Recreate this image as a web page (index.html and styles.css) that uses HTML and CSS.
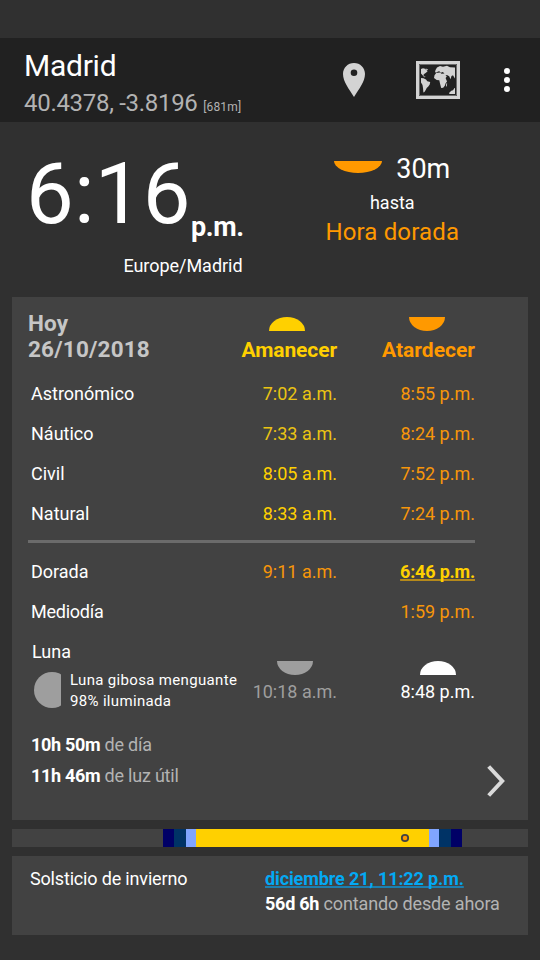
FILE: index.html
```html
<!DOCTYPE html>
<html lang="es">
<head>
<meta charset="utf-8">
<title>Madrid</title>
<link rel="stylesheet" href="styles.css">
</head>
<body>
<header class="bar">
  <div class="place">
    <div class="city">Madrid</div>
    <div class="coords"><span class="latlon">40.4378, -3.8196</span> <small>[681m]</small></div>
  </div>
  <svg class="pin" width="22" height="34" viewBox="0 0 22 34"><path fill="#d3d3d3" fill-rule="evenodd" d="M11 0C4.800 0 0 4.800 0 11c0 7.500 6 15 11 23 5-8 11-15.500 11-23C22 4.800 17.200 0 11 0zm0 6.400a3.300 3.300 0 1 1 0 6.600 3.300 3.300 0 0 1 0-6.600z"/></svg>
  <svg class="map" width="44" height="38" viewBox="0 0 44 38">
    <path fill="none" stroke="#d3d3d3" stroke-width="3" d="M1.500 1.500h41v35h-41z"/>
    <path fill="none" stroke="#6b6b6b" d="M3.500 3.500h37v31h-37z"/>
    <g fill="#d3d3d3">
      <path d="M5 8l2-.8 2 .6 1.600 1.500 1 1-1.600 1.500-1.500 1-1.200 1.200 1 1.500 1.500.2-1.500.6L5 12.500zM9.500 7.500l2.500.8-1 1.200zM5 17l2.500.3 2.500 1.200 1.300 1.700 2.900.9-.5 2.500-1.400 2-1.600 1.500-1 2L8.400 31l-1 .4L7 27l-.5-3L5 21.500z"/>
      <path d="M19.500 9l1.500-2.500L24 5l3 .7 4-.9 3 1.400 5 .3v11l-1-1.500-1-1.700-1.500.6-1 3.300-1.300-3-1.700-1-2-.3 1.300 1.600-1.200 1.600L31 20.500l-1.500 2-.7 2.300-1.600 2-2 .2L24 22.500l-.7-3.300-2.600-.2L18 17l.5-2.700L20.200 12l3.800-.4 1.500 1.200 3-.2-1.700-1.500-2 .7-1.500-1.600-1.300.4-1.500 1-1.500-.3z"/>
      <path d="M30.400 22.300l.8.200-.5 3-.8-.2zM33 32l2.300-2.200 1.700-.5L38.500 27H39v6h-5.500z"/>
    </g>
  </svg>
  <svg class="dots" width="6" height="24" viewBox="0 0 6 24" fill="#fff"><circle cx="3" cy="3" r="3"/><circle cx="3" cy="12" r="3"/><circle cx="3" cy="21" r="3"/></svg>
</header>

<section class="now">
  <div class="clock">
    <div class="time"><span class="digits">6:16</span><span class="ampm">p.m.</span></div>
    <div class="zone">Europe/Madrid</div>
  </div>
  <div class="next">
    <div class="remain"><i class="sun wide"></i><span>30m</span></div>
    <div class="until">hasta</div>
    <div class="golden">Hora dorada</div>
  </div>
</section>

<main class="card today">
  <div class="head">
    <div class="date">Hoy<br>26/10/2018</div>
    <div class="col rise"><i class="sun up"></i><span>Amanecer</span></div>
    <div class="col set"><i class="sun down"></i><span>Atardecer</span></div>
  </div>
  <div class="row"><span>Astronómico</span><span class="yellow">7:02 a.m.</span><span class="orange">8:55 p.m.</span></div>
  <div class="row"><span>Náutico</span><span class="yellow">7:33 a.m.</span><span class="orange">8:24 p.m.</span></div>
  <div class="row"><span>Civil</span><span class="bright">8:05 a.m.</span><span class="orange">7:52 p.m.</span></div>
  <div class="row"><span>Natural</span><span class="bright">8:33 a.m.</span><span class="orange">7:24 p.m.</span></div>
  <hr>
  <div class="row"><span>Dorada</span><span class="orange">9:11 a.m.</span><span class="upcoming">6:46 p.m.</span></div>
  <div class="row"><span class="noon">Mediodía</span><span></span><span class="orange">1:59 p.m.</span></div>
  <div class="moon">
    <div class="phase">
      <div class="title">Luna</div>
      <div class="info"><svg width="27" height="36" viewBox="0 0 27 36"><circle cx="18" cy="18" r="18" fill="#9e9e9e"/></svg>
        <div class="desc">Luna gibosa menguante<br>98% iluminada</div></div>
    </div>
    <div class="mcol dim"><i class="sun down"></i><span>10:18 a.m.</span></div>
    <div class="mcol lit"><i class="sun up"></i><span>8:48 p.m.</span></div>
  </div>
  <div class="foot">
    <div class="lengths">
      <div><b>10h 50m</b> de día</div>
      <div><b>11h 46m</b> de luz útil</div>
    </div>
    <svg class="chev" width="18" height="32" viewBox="0 0 18 32"><path fill="none" stroke="#dadada" stroke-width="4" d="M1.700 1.500L15.200 16 1.700 30.500"/></svg>
  </div>
</main>

<div class="daybar">
  <svg width="516" height="18" viewBox="0 0 516 18" shape-rendering="crispEdges">
    <path fill="#000066" d="M151 0h299v18H151z"/>
    <path fill="#003366" d="M162 0h277v18H162z"/>
    <path fill="#80a5ff" d="M174 0h253v18H174z"/>
    <path fill="#ffd000" d="M184 0h233v18H184z"/>
    <circle cx="393" cy="9" r="3.200" fill="#ff9900" stroke="#424242" stroke-width="1.800" shape-rendering="auto"/>
  </svg>
</div>

<section class="card solstice">
  <div class="name">Solsticio de invierno</div>
  <div class="when">
    <div class="link">diciembre 21, 11:22 p.m.</div>
    <div class="count"><b>56d 6h</b> contando desde ahora</div>
  </div>
</section>
</body>
</html>
```

FILE: styles.css
```css
* { box-sizing: border-box; }
body {
  margin: 0;
  padding-top: 38px;
  width: 540px;
  height: 960px;
  overflow: hidden;
  background: #303030;
  color: #fff;
  font: 18px/22px Roboto, sans-serif;
}
svg, i { display: block; }

.bar { display: flex; align-items: flex-start; height: 84px; background: #212121; }
.place { width: 343px; padding: 10px 0 0 24px; white-space: nowrap; }
.city { font-size: 30px; line-height: 36px; letter-spacing: -.25px; }
.coords { margin-top: 4px; font-size: 24px; line-height: 30px; letter-spacing: -.3px; color: #b3b3b3; }
.coords small { font-size: 12px; letter-spacing: .15px; }
.pin { margin-top: 25px; }
.map { margin: 23px 0 0 51px; }
.dots { margin: 30px 0 0 44px; }

.now { display: flex; height: 175px; padding-top: 23px; }
.clock { width: 245px; }
.time { display: flex; height: 110px; padding-left: 26px; }
.digits { width: 165px; font-size: 85px; line-height: 98px; letter-spacing: .2px; }
.ampm { margin-top: 66px; font-size: 27px; line-height: 32px; font-weight: bold; letter-spacing: -.4px; }
.zone { text-align: right; padding-right: 2px; letter-spacing: -.03px; }
.next { width: 296px; padding-top: 6px; text-align: center; }
.remain { display: flex; justify-content: center; height: 39px; font-size: 27px; line-height: 36px; }
.wide { width: 48px; height: 12px; margin: 10px 14px 0 0; color: #ff9900; }
.until { margin-top: 2px; }
.golden { margin-top: 4px; font-size: 24px; line-height: 28px; letter-spacing: .15px; color: #ff9900; }

.sun { background: currentColor; }
.up, .down { width: 36px; height: 14px; }
.up { border-radius: 50% 50% 0 0 / 100% 100% 0 0; }
.down, .wide { border-radius: 0 0 50% 50% / 0 0 100% 100%; }

.card { margin: 0 12px; background: #424242; }
.today { height: 523px; padding: 13px 0 0 16px; }
.head { display: flex; height: 64px; }
.date { width: 171px; font-size: 22.500px; line-height: 26px; font-weight: bold; letter-spacing: .2px; color: #c6c6c6; }
.col { display: flex; flex-direction: column; align-items: flex-end; width: 138px; padding-top: 7px; font-size: 21px; line-height: 24px; font-weight: bold; }
.col span { margin-top: 7px; letter-spacing: -.1px; }
.set span { letter-spacing: 0; }
.rise { color: #ffd000; }
.rise .sun { margin-right: 32px; }
.set { color: #ff9900; }
.set .sun { margin-right: 30px; }
.row { display: grid; grid-template-columns: 170px 136px 138px; line-height: 40px; padding-left: 3px; }
.row span + span { text-align: right; }
.noon { letter-spacing: -.25px; }
.yellow { color: #ebc412; }
.bright { color: #ffd000; }
.orange { color: #f7960a; }
.row .upcoming { justify-self: end; color: #ffd000; font-weight: bold; letter-spacing: -.2px; text-decoration: underline 2px #b5891a; text-underline-offset: 1px; text-decoration-skip-ink: none; }
hr { width: 447px; height: 3px; margin: 6px 0 9px; border: 0; background: #6b6b6b; }
.moon { display: flex; height: 97px; }
.phase { width: 221px; padding-left: 4px; }
.title { line-height: 40px; }
.info { display: flex; padding-left: 2px; white-space: nowrap; }
.desc { margin: -2px 0 0 9px; font-size: 15px; line-height: 21px; letter-spacing: .33px; }
.mcol { display: flex; flex-direction: column; align-items: flex-end; padding-top: 29px; }
.mcol span { margin-top: 6px; }
.dim { width: 88px; color: #9e9e9e; }
.dim .sun { margin-right: 24px; }
.lit { width: 138px; }
.lit .sun { margin-right: 19px; }
.foot { display: flex; justify-content: space-between; padding: 0 23px 0 3px; color: #b3b3b3; }
.lengths { line-height: 31px; letter-spacing: -.22px; }
.lengths b, .count b { color: #fff; }
.lengths b { letter-spacing: -.3px; }
.chev { margin-top: 36px; }

.daybar { margin: 9px 12px; height: 18px; background: #424242; }

.solstice { display: flex; height: 79px; padding: 12px 0 0 18px; }
.name { width: 235px; letter-spacing: -.17px; }
.link { width: max-content; color: #03a9f4; font-weight: bold; letter-spacing: -.12px; text-decoration: underline 2px #1c7fb0; text-underline-offset: 1px; text-decoration-skip-ink: none; }
.count { margin-top: 3px; letter-spacing: -.13px; color: #b3b3b3; }
.count b { letter-spacing: -.25px; }
```
